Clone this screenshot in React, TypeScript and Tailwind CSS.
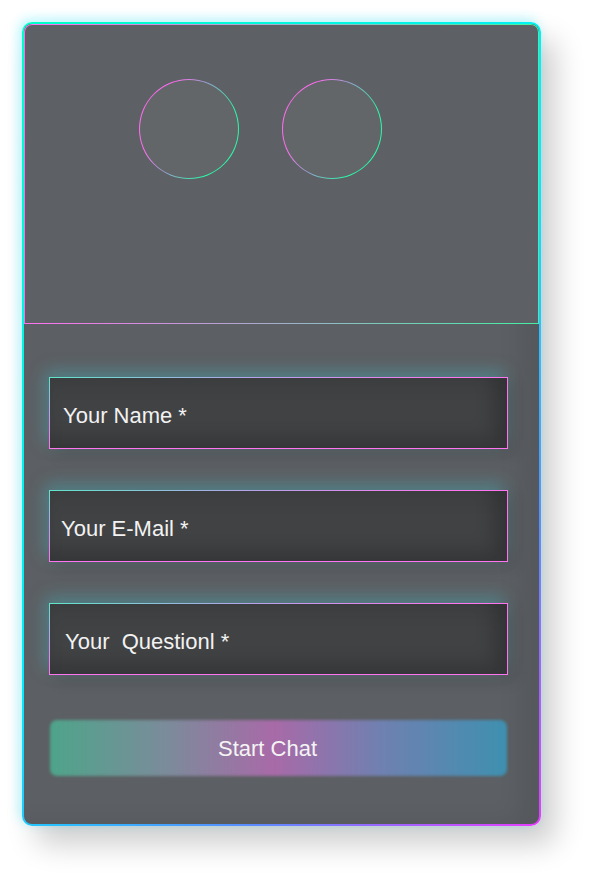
import React from "react";

function Field({ label, padLeft }: { label: string; padLeft: string }) {
  return (
    <div className="p-px bg-[linear-gradient(to_bottom_right,#5fe6c8_0%,#b4a4ea_22%,#ff74f0_45%,#ff74f0_100%)] shadow-[-4px_-6px_16px_rgba(70,175,185,0.45),6px_6px_14px_rgba(0,0,0,0.12)]">
      <div
        className={`h-[70px] flex items-center ${padLeft} bg-[#414244] shadow-[inset_-14px_-10px_18px_rgba(0,0,0,0.18),inset_0_10px_16px_rgba(0,0,0,0.06)] text-[22px] text-[#f2f2f2] pt-[5px] whitespace-pre`}
      >
        {label}
      </div>
    </div>
  );
}

function Circle() {
  return (
    <div className="w-[100px] h-[100px] rounded-full p-px bg-[linear-gradient(115deg,#ff6cf0_25%,#8aa8c8_50%,#2cf8a8_75%)]">
      <div className="w-full h-full rounded-full bg-[#626669]" />
    </div>
  );
}

export default function App() {
  return (
    <div
      className="min-h-[881px] w-[595px] bg-white pt-[22px] pl-[22px]"
      style={{ fontFamily: '"Liberation Sans", Arial, sans-serif' }}
    >
      <div className="w-[519px] h-[804px] rounded-[10px] p-[2px] bg-[linear-gradient(135deg,#00ffc8_0%,#00eeff_50%,#5a8cff_78%,#e83cff_100%)] shadow-[-3px_-3px_12px_rgba(0,225,255,0.28),14px_18px_30px_rgba(0,0,0,0.2)]">
        <div className="w-full h-full rounded-[8px] overflow-hidden bg-[#5c5f63] shadow-[inset_-18px_0_24px_rgba(0,0,0,0.08)] flex flex-col">
          <div className="h-[300px] p-px bg-[linear-gradient(90deg,#ff70f0,#44f0a4)] rounded-t-[8px]">
            <div className="h-full bg-[#5d6064] rounded-t-[7px] pl-[114px] pt-[54px] flex gap-[43px] items-start">
              <Circle />
              <Circle />
            </div>
          </div>
          <div className="pl-[25px] pr-[31px] pt-[53px] flex flex-col">
            <Field label="Your Name *" padLeft="pl-[13px]" />
            <div className="h-[41px]" />
            <Field label="Your E-Mail *" padLeft="pl-[11px]" />
            <div className="h-[41px]" />
            <Field label="Your  Questionl *" padLeft="pl-[15px]" />
            <div className="h-[45px]" />
            <div className="relative mx-px h-[56px] flex items-center justify-center">
              <span className="absolute inset-0 rounded-[7px] blur-[1.5px] bg-[linear-gradient(90deg,#4ea48a_0%,#7a8c9a_25%,#a86aa8_49%,#7080b0_72%,#3e90b0_100%)]" />
              <span className="relative text-[22px] text-[#f4f4f4] pr-[22px]">Start Chat</span>
            </div>
          </div>
        </div>
      </div>
    </div>
  );
}
